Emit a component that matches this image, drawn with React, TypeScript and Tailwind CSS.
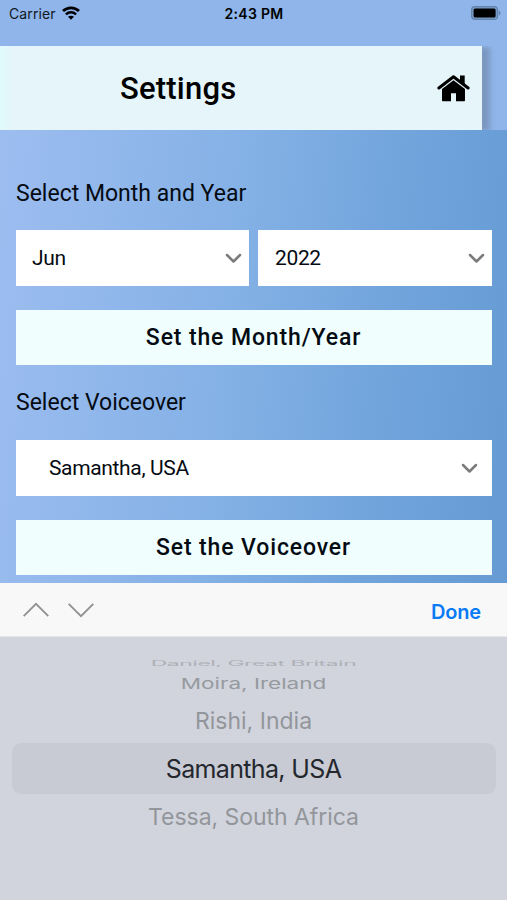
function Chevron() {
  return (
    <svg className="h-[11px] w-[17px] shrink-0" viewBox="0 0 17 11" fill="none">
      <path d="M2 2l6.500 6.500L15 2" stroke="#7b7b7b" strokeWidth="2.500" strokeLinecap="round" strokeLinejoin="round" />
    </svg>
  );
}

function HomeIcon() {
  return (
    <svg className="h-[27px] w-[33px]" viewBox="0 0 33 27">
      <path d="M1.900 13L16.500 1.800 31.100 13" fill="none" stroke="#000" strokeWidth="3" strokeLinecap="round" strokeLinejoin="round" />
      <path d="M23 .5h4.700v10L23 6.500z" />
      <path d="M16.500 5.200L28 14v11.500q0 .8-.8.8h-8.200v-8h-5v8H5.800q-.8 0-.8-.8V14z" />
    </svg>
  );
}

function StatusBar() {
  return (
    <div className="grid h-[46px] grid-cols-3 items-start bg-[#8fb5ea] pt-[4px] pr-[6px] pl-[9px] font-['Inter',sans-serif] text-[14px] leading-[20px] text-[#101822]">
      <div className="flex items-center gap-[6px]">
        <span className="tracking-[0.1px]">Carrier</span>
        {/* Wifi */}
        <svg className="mt-[-2px] h-[14px] w-[18px]" viewBox="0 0 18 14" fill="none" stroke="#000">
          <path d="M1 5c4.500-4.300 11.500-4.300 16 0" strokeWidth="2.700" />
          <path d="M3.900 8.300c2.900-2.700 7.300-2.700 10.200 0" strokeWidth="2.500" />
          <path d="M9 13.800L6 10.800c1.700-1.500 4.300-1.500 6 0z" fill="#000" stroke="none" />
        </svg>
      </div>
      <span className="pr-[2px] text-center font-semibold tracking-[0.3px] text-black">2:43 PM</span>
      {/* Battery */}
      <svg className="mt-[2px] h-[14px] w-[30px] justify-self-end" viewBox="0 0 30 14">
        <rect x=".6" y=".6" width="26" height="12.800" rx="3.500" fill="#779bc8" stroke="#6583a8" strokeWidth="1.200" />
        <rect x="2.600" y="2.400" width="22" height="9.200" rx="1.600" fill="#000" />
        <path d="M27.800 4.500c2.200.8 2.200 4.200 0 5z" fill="#6583a8" />
      </svg>
    </div>
  );
}

function Header() {
  return (
    <div className="h-[84px] overflow-hidden bg-[#8fb5ea]">
      <header className="flex h-full w-[482px] items-center justify-between bg-[linear-gradient(90deg,#e0fafc_0px,#e3f6f9_11px,#e5f5f9_13px,#e5f5f9_100%)] pr-[12px] pl-[120px] shadow-[8px_1px_5px_0px_#7c98c1]">
        <h1 className="pt-px text-[31px] leading-[40px] font-medium tracking-[0.2px] text-black">Settings</h1>
        <HomeIcon />
      </header>
    </div>
  );
}

function ActionButton({ label }: { label: string }) {
  return (
    <button className="mt-[24px] flex h-[55px] w-full items-center justify-center bg-[#f0fffe] pt-[2px] pr-px text-[23px] font-medium tracking-[0.87px]">
      {label}
    </button>
  );
}

function SelectBox({ value, className }: { value: string; className: string }) {
  return (
    <div className={`flex h-[56px] items-center justify-between bg-white text-[21px] tracking-[-0.35px] ${className}`}>
      <span className="pt-[2px]">{value}</span>
      <Chevron />
    </div>
  );
}

function Accessory() {
  return (
    <div className="flex h-[54px] items-center justify-between border-b border-[#e5e7eb] bg-[#f8f8f8] pr-[26px] pl-[23px]">
      <svg className="h-[16px] w-[71px]" viewBox="0 0 71 16" fill="none" stroke="#929292" strokeWidth="1.900">
        <path d="M.7 14.200L13 1.800l12.300 12.400" />
        <path d="M45.700 1.800L58 14.200 70.300 1.800" />
      </svg>
      <button className="pt-[4px] text-[20px] font-semibold tracking-[-0.15px] text-[#087bf5]">Done</button>
    </div>
  );
}

// The wheel squashes rows vertically as they turn away from the centre
function Picker() {
  return (
    <div className="flex h-[263px] flex-col items-center overflow-hidden bg-[#d1d4dc] pt-[22px] whitespace-nowrap text-[#969a9f]">
      <div className="flex h-[9px] items-center overflow-hidden opacity-60">
        <span className="scale-y-[0.3] text-[23px] leading-[24px] tracking-[-0.5px]">Daniel, Great Britain</span>
      </div>
      <div className="flex h-[32px] items-center">
        <span className="scale-y-[0.66] text-[22.500px] leading-[24px]">Moira, Ireland</span>
      </div>
      <div className="flex h-[43px] items-center text-[23px] text-[#92969b]">Rishi, India</div>
      <div className="flex h-[51px] w-[484px] items-center justify-center rounded-[9px] bg-[#c8cbd4] pt-[2px] text-[25px] tracking-[-0.65px] text-[#24272d]">
        Samantha, USA
      </div>
      <div className="flex h-[47px] items-center text-[23px] tracking-[-0.05px] text-[#92969b]">Tessa, South Africa</div>
    </div>
  );
}

export default function App() {
  return (
    <div className="flex h-[900px] w-[507px] flex-col overflow-hidden font-['Roboto',sans-serif] text-[#050b12]">
      <StatusBar />
      <Header />

      <main className="h-[453px] bg-[linear-gradient(96deg,#9dbdf0_0%,#84b1e6_45%,#72a5dc_72%,#659ad3_100%)] pt-[47px] pr-[15px] pl-[16px]">
        <h2 className="text-[23px] leading-[34px]">Select Month and Year</h2>
        <div className="mt-[19px] grid grid-cols-[233px_234px] gap-[9px]">
          <SelectBox value="Jun" className="pr-[7px] pl-[16px]" />
          <SelectBox value="2022" className="pr-[7px] pl-[17px]" />
        </div>
        <ActionButton label="Set the Month/Year" />

        <h2 className="mt-[21px] text-[23px] leading-[34px]">Select Voiceover</h2>
        <SelectBox value="Samantha, USA" className="mt-[20px] pr-[14px] pl-[33px]" />
        <ActionButton label="Set the Voiceover" />
      </main>

      <div className="font-['Inter',sans-serif]">
        <Accessory />
        <Picker />
      </div>
    </div>
  );
}
